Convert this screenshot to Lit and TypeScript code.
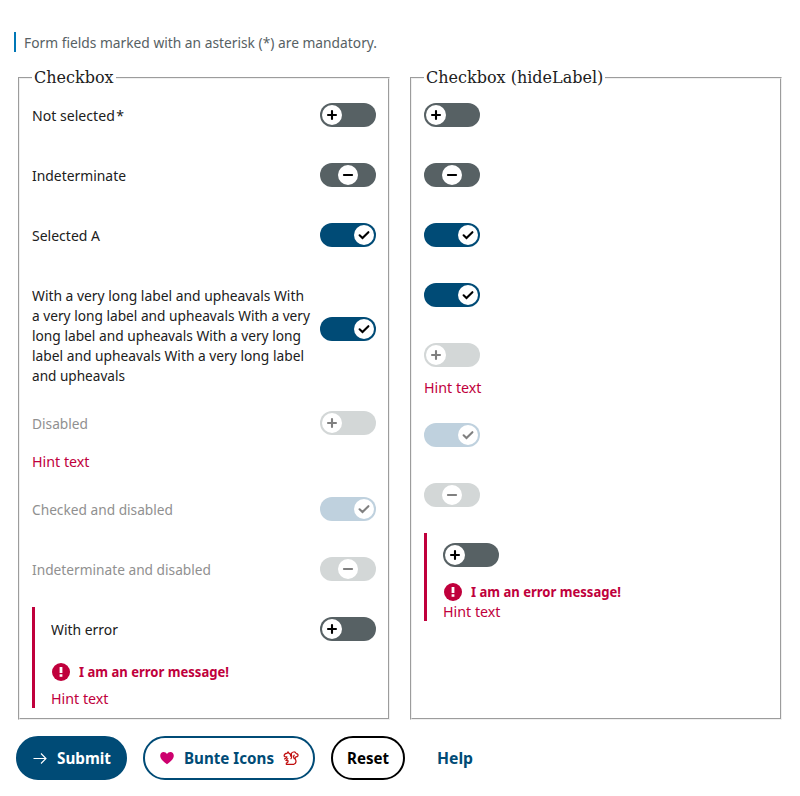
import { LitElement, html, css, svg, nothing } from "lit";
import { customElement, property } from "lit/decorators.js";

/** One line of text, condensed horizontally to a given width. */
@customElement("fit-text")
class FitText extends LitElement {
  @property({ type: Number }) w = 0;
  @property() text = "";
  static styles = css`
    :host { display: block; height: 20px; line-height: 20px; white-space: nowrap; flex: none; }
    .line { display: inline-block; transform-origin: 0 50%; }
  `;
  render() {
    return html`<span class="line">${this.text}</span>`;
  }
  updated() {
    const line = this.renderRoot.querySelector(".line") as HTMLElement;
    this.style.width = `${this.w}px`;
    line.style.transform = `scaleX(${this.w / line.getBoundingClientRect().width})`;
  }
}

type State = "off" | "mixed" | "on";

@customElement("toggle-switch")
class ToggleSwitch extends LitElement {
  @property() state: State = "off";
  @property({ type: Boolean }) disabled = false;
  static styles = css`
    :host { display: block; flex: none; }
    .track { box-sizing: border-box; width: 56px; height: 24px; border-radius: 12px; padding: 2px; display: flex; background: #576164; }
    .mixed { justify-content: center; }
    .on { justify-content: flex-end; background: #004b76; }
    .disabled { background: #d3d7d7; }
    .on.disabled { background: #bfd1de; }
    .knob { width: 20px; height: 20px; border-radius: 50%; background: #fff; color: #000; }
    .disabled .knob { color: #808080; }
    svg { display: block; }
  `;
  render() {
    const glyph = {
      off: svg`<path d="M10 6v8M6 10h8"/>`,
      mixed: svg`<path d="M5.9 10h8.2"/>`,
      on: svg`<path d="M5.6 10.3 8.5 13 14.4 7.2"/>`,
    }[this.state];
    return html`<div class="track ${this.state} ${this.disabled ? "disabled" : ""}">
      <div class="knob">
        <svg width="20" height="20" viewBox="0 0 20 20" fill="none" stroke="currentColor" stroke-width="2.1" stroke-linecap="round">${glyph}</svg>
      </div>
    </div>`;
  }
}

interface Field {
  lines: [string, number][];
  state: State;
  disabled?: boolean;
  hint?: boolean;
  error?: boolean;
}

const fields: Field[] = [
  { lines: [["Not selected\u200a*", 92]], state: "off" },
  { lines: [["Indeterminate", 94]], state: "mixed" },
  { lines: [["Selected A", 68]], state: "on" },
  {
    lines: [
      ["With a very long label and upheavals With", 272],
      ["a very long label and upheavals With a very", 278],
      ["long label and upheavals With a very long", 269],
      ["label and upheavals With a very long label", 272],
      ["and upheavals", 93],
    ],
    state: "on",
  },
  { lines: [["Disabled", 56]], state: "off", disabled: true, hint: true },
  { lines: [["Checked and disabled", 141]], state: "on", disabled: true },
  { lines: [["Indeterminate and disabled", 179]], state: "mixed", disabled: true },
  { lines: [["With error", 67]], state: "off", error: true, hint: true },
];

@customElement("app-root")
class AppRoot extends LitElement {
  static styles = css`
    :host { display: block; box-sizing: border-box; height: 796px; padding: 32px 16px 16px; background: #fff; color: #202020; font: 15.3px/20px "Noto Sans", sans-serif; overflow: hidden; }
    .note { margin-left: -2px; border-left: 2px solid #0077b6; padding-left: 8px; color: #576164; }
    .columns { display: grid; grid-template-columns: 1fr 1fr; gap: 16px; margin-top: 16px; }
    fieldset { box-sizing: border-box; height: 652px; min-width: 0; margin: 0 2px; border: 2px groove #f0f0f0; padding: 6px 12px 10px; }
    legend { padding: 0 2px; font: 16px/19px "DejaVu Serif", serif; }
    .list { display: flex; flex-direction: column; gap: 16px; }
    .row { display: flex; justify-content: space-between; align-items: center; min-height: 44px; }
    .label { align-self: flex-start; padding-top: 12px; }
    .long { height: 112px; }
    .dim { color: #909090; }
    .error { border-left: 3px solid #c0003c; padding-left: 16px; }
    .hint { color: #c0003c; margin-top: 6px; }
    .bare .hint { margin-top: 0; height: 20px; }
    .message { display: flex; align-items: center; gap: 8px; color: #c0003c; font-weight: 700; font-size: 15px; margin-top: 11px; }
    .message fit-text { margin-top: -2px; }
    .bare .message { margin-top: 5px; }
    .error .hint { margin-top: 6px; height: 20px; }
    .bare .error .hint { margin-top: -1px; }
    .actions { display: flex; gap: 16px; margin-top: 16px; }
    .btn { box-sizing: border-box; height: 44px; border: 2px solid #004b76; border-radius: 22px; padding: 0 14px; display: flex; align-items: center; font: 700 16.5px/20px "Noto Sans", sans-serif; color: #004b76; background: #fff; gap: 8px; }
    .primary { background: #004b76; color: #fff; gap: 9px; }
    .reset { border-color: #000; color: #000; }
    .link { border-color: transparent; }
    svg { display: block; flex: none; }
  `;

  item(f: Field, bare: boolean) {
    return html`<div class=${f.error ? "error" : ""}>
      <div class="row ${!bare && f.lines.length > 1 ? "long" : ""}">
        ${bare
          ? nothing
          : html`<div class="label ${f.disabled ? "dim" : ""}">
              ${f.lines.map(([t, w]) => html`<fit-text .text=${t} .w=${w}></fit-text>`)}
            </div>`}
        <toggle-switch .state=${f.state} ?disabled=${f.disabled}></toggle-switch>
      </div>
      ${f.error
        ? html`<div class="message">
            <svg width="20" height="20" viewBox="0 0 20 20">
              <circle cx="10" cy="10" r="9" fill="#c0003c" />
              <path d="M8.6 5h2.8v6H8.6zM8.6 12.2h2.8v2.6H8.6z" fill="#fff" />
            </svg>
            <fit-text .text=${"I am an error message!"} .w=${150}></fit-text>
          </div>`
        : nothing}
      ${f.hint ? html`<div class="hint"><fit-text .text=${"Hint text"} .w=${57.5}></fit-text></div>` : nothing}
    </div>`;
  }

  render() {
    return html`
      <div class="note"><fit-text .text=${"Form fields marked with an asterisk (*) are mandatory."} .w=${353}></fit-text></div>
      <div class="columns">
        <fieldset>
          <legend>Checkbox</legend>
          <div class="list">${fields.map((f) => this.item(f, false))}</div>
        </fieldset>
        <fieldset>
          <legend>Checkbox (hideLabel)</legend>
          <div class="list bare">${fields.map((f) => this.item(f, true))}</div>
        </fieldset>
      </div>
      <div class="actions">
        <div class="btn primary">
          <svg width="16" height="16" viewBox="0 0 16 16" fill="none" stroke="currentColor" stroke-width="1.1"><path d="M1.5 8.5H14M9 3.5l5 5-5 5" /></svg>
          <fit-text .text=${"Submit"} .w=${54}></fit-text>
        </div>
        <div class="btn secondary">
          <svg width="17" height="16" viewBox="0 0 17 16"><path d="M8 14.3C6 12.7 1.2 9.4 1.2 5.8 1.2 3.5 2.7 2 4.6 2 6 2 7.3 2.7 8 4c.7-1.3 2-2 3.4-2 1.9 0 3.4 1.5 3.4 3.8 0 3.6-4.8 6.9-6.8 8.5z" fill="#cd006e" /></svg>
          <fit-text .text=${"Bunte Icons"} .w=${90}></fit-text>
          <svg width="17" height="16" viewBox="0 0 17 16" fill="none" stroke="#c00d0d" stroke-width="1.2" stroke-linejoin="round" stroke-linecap="round"><path d="M5.3 3.2 6 1.9 6.8 3.1C8.2 3.6 8.9 4.8 8.5 6.2M5.3 3.2C3.8 3.4 2.2 4.6 2.1 5.8c0 1 1.2 1.3 2.9 1M5 6.8C4.9 8 4 8.7 2.6 8.9M5.8 8.6 3.9 10.4 6.2 10.9C6.2 12.4 5.4 12.9 4.3 13.2v1.1h7.6c2-.9 2.4-3 1.6-4.8-.6-1.4-.5-2.3.6-2.6 1.6-.2 2.2-1.2 1.8-2.4-.3-.8-1-.9-1.7-.9C13.7 2.3 12.6 1.8 11.4 2 9.9 2.2 9 3.5 9.5 5.2c.4 1.3.3 2.4-.5 3.5M12.2 5.2c-1 1.2-.6 2.5 0 3.6" /></svg>
        </div>
        <div class="btn reset"><fit-text .text=${"Reset"} .w=${42}></fit-text></div>
        <div class="btn link"><fit-text .text=${"Help"} .w=${36}></fit-text></div>
      </div>
    `;
  }
}
